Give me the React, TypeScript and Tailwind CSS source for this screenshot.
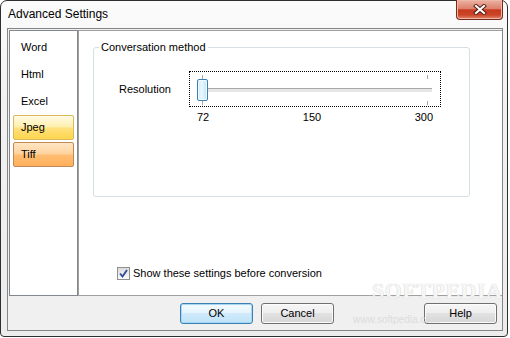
import React from "react";

const formats = ["Word", "Html", "Excel", "Jpeg", "Tiff"];

function FormatItem({ name }: { name: string }) {
  if (name === "Jpeg") {
    return (
      <div className="flex h-[27px] items-center px-[3px] py-[1px]">
        <div className="flex h-[25px] w-full items-center rounded-[2px] border border-[#d9b95a] bg-[linear-gradient(to_bottom,#fffbe6_0%,#fff0b0_45%,#ffe07a_55%,#ffd54f_100%)] pl-[7px]">
          Jpeg
        </div>
      </div>
    );
  }
  if (name === "Tiff") {
    return (
      <div className="flex h-[27px] items-center px-[3px] py-[1px]">
        <div className="flex h-[25px] w-full items-center rounded-[2px] border border-[#c08a58] bg-[linear-gradient(to_bottom,#ffe6c4_0%,#ffd3a0_45%,#ffbc70_55%,#ffb05c_100%)] pl-[7px]">
          Tiff
        </div>
      </div>
    );
  }
  return <div className="flex h-[27px] items-center pl-[11px] pt-[1px]">{name}</div>;
}

function WinButton({ label, primary }: { label: string; primary?: boolean }) {
  return (
    <button
      type="button"
      className={
        primary
          ? "flex h-[21px] w-[73px] items-center justify-center rounded-[3px] border border-[#3c7fb1] bg-[linear-gradient(to_bottom,#f4fbfe_0%,#e3f3fc_50%,#cfeafb_50%,#c0e3f8_100%)] shadow-[inset_0_0_0_1px_#a6d8f5]"
          : "flex h-[21px] w-[73px] items-center justify-center rounded-[3px] border border-[#707070] bg-[linear-gradient(to_bottom,#f6f6f6_0%,#eeeeee_50%,#e2e2e2_50%,#d6d6d6_100%)] shadow-[inset_0_0_0_1px_#fbfbfb]"
      }
    >
      {label}
    </button>
  );
}

function Slider() {
  return (
    <div className="relative h-[36px] w-[252px] border border-dotted border-black">
      <div className="absolute left-[12px] top-[3px] h-[4px] w-px bg-[#a8a8a8]" />
      <div className="absolute left-[12px] top-[29px] h-[4px] w-px bg-[#a8a8a8]" />
      <div className="absolute left-[237px] top-[3px] h-[4px] w-px bg-[#a8a8a8]" />
      <div className="absolute left-[237px] top-[29px] h-[4px] w-px bg-[#a8a8a8]" />
      <div className="absolute left-[12px] top-[16px] h-[4px] w-[230px] border-t border-[#a9a9a9] bg-[#e6e6e6]" />
      <div className="absolute left-[7px] top-[7px] h-[22px] w-[11px] rounded-[2px] border border-[#3c7fb1] bg-[linear-gradient(to_right,#c9ecfd_0%,#eaf8ff_40%,#bfe6fb_100%)] shadow-[inset_0_0_0_1px_#f2fbff]" />
    </div>
  );
}

export default function App() {
  return (
    <div className="h-[338px] w-[510px] bg-white font-['Liberation_Sans',Arial,sans-serif] text-[11px] leading-[13px] text-black">
      <div className="relative flex h-[337px] w-[508px] flex-col rounded-t-[7px] rounded-b-[4px] border border-[#2e2e2e] bg-[linear-gradient(to_bottom,#fbfbfb_0%,#f1f1f1_30%,#ececec_100%)] pb-[5px] pl-[6px] pr-[4px]">
        <div className="flex h-[27px] items-center pl-[1px] text-[12px]">Advanced Settings</div>

        <div className="absolute right-[4px] top-[-1px] flex h-[20px] w-[47px] items-center justify-center rounded-b-[4px] border border-t-0 border-[#7a2a1c] bg-[linear-gradient(to_bottom,#ecb3a5_0%,#de806b_45%,#c73a21_52%,#cc4428_78%,#e0866c_100%)] shadow-[inset_0_0_0_1px_#f0b8a8]">
          <svg width="14" height="11" viewBox="0 0 14 11">
            <path d="M3 2 L11 9 M11 2 L3 9" stroke="#4a1a12" strokeWidth="4" strokeLinecap="square" />
            <path d="M3 2 L11 9 M11 2 L3 9" stroke="#ffffff" strokeWidth="2.2" strokeLinecap="square" />
          </svg>
        </div>

        <div className="flex flex-1 flex-col border border-[#858585] bg-[#f0f0f0]">
          <div className="flex h-[267px] pl-[1px] pt-[1px]">
            <div className="h-[266px] w-[69px] border border-[#828790] bg-white pt-[2px]">
              {formats.map((f) => (
                <FormatItem key={f} name={f} />
              ))}
            </div>
            <div className="flex h-[266px] flex-1 flex-col border-y border-l border-[#a0a0a0] bg-white">
              <fieldset className="ml-[14px] mt-[10px] h-[156px] w-[377px] rounded-[3px] border border-[#d5dfe5] pl-[5px]">
                <legend className="px-[2px] leading-[13px]">Conversation method</legend>
                <div className="mt-[17px] flex items-center pl-[20px]">
                  <span className="w-[70px]">Resolution</span>
                  <Slider />
                </div>
                <div className="ml-[98px] mt-[4px] flex w-[236px] justify-between">
                  <span>72</span>
                  <span>150</span>
                  <span>300</span>
                </div>
              </fieldset>
              <label className="ml-[38px] mt-[70px] flex items-center gap-[3px]">
                <span className="flex h-[13px] w-[13px] items-center justify-center border border-[#8e8f8f] bg-[linear-gradient(to_bottom,#dcdcdc,#fbfbfb)]">
                  <svg width="9" height="9" viewBox="0 0 9 9">
                    <path d="M1 4.5 L3.5 7.5 L8 1" fill="none" stroke="#2a4a9a" strokeWidth="1.8" />
                  </svg>
                </span>
                Show these settings before conversion
              </label>
            </div>
          </div>
          <div className="flex flex-1 items-start pl-[172px] pr-[5px] pt-[7px]">
            <div className="flex gap-[8px]">
              <WinButton label="OK" primary />
              <WinButton label="Cancel" />
            </div>
            <div className="ml-auto">
              <WinButton label="Help" />
            </div>
          </div>
        </div>

        <div className="pointer-events-none absolute left-[371px] top-[279px] font-['Liberation_Serif',serif] text-[22px] font-bold leading-[22px] tracking-[0.5px] text-[#f6f6f6] [text-shadow:0_0_1px_#bdbdbd]">
          SOFTPEDIA
        </div>
        <div className="pointer-events-none absolute left-[352px] top-[313px] text-[10px] leading-[12px] text-[#dcdcdc]">
          www.softpedia.com
        </div>
      </div>
    </div>
  );
}
